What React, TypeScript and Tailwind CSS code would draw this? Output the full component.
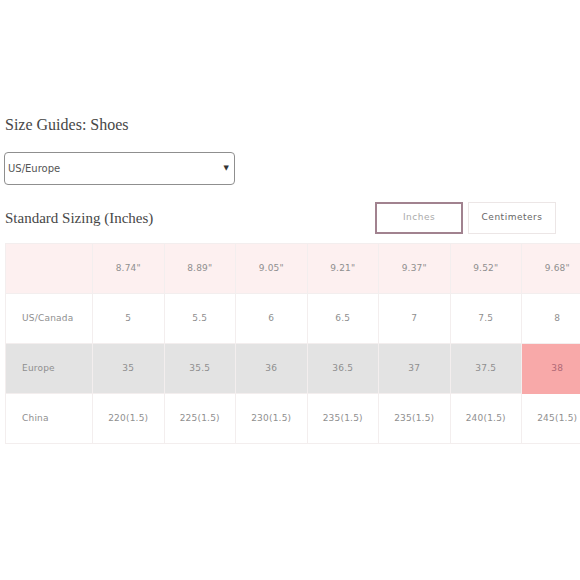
import React from 'react'

const sizes = ['8.74"', '8.89"', '9.05"', '9.21"', '9.37"', '9.52"', '9.68"']
const us = ['5', '5.5', '6', '6.5', '7', '7.5', '8']
const eu = ['35', '35.5', '36', '36.5', '37', '37.5', '38']
const cn = ['220(1.5)', '225(1.5)', '230(1.5)', '235(1.5)', '235(1.5)', '240(1.5)', '245(1.5)']

function Cell({ children, className = '' }: { children?: React.ReactNode; className?: string }) {
  return (
    <div className={`h-[50px] flex items-center justify-center border-r border-b border-[#f3eeee] ${className}`}>
      {children}
    </div>
  )
}

function Label({ children, className = '' }: { children?: React.ReactNode; className?: string }) {
  return (
    <div className={`h-[50px] flex items-center pl-4 border-r border-b border-[#f3eeee] ${className}`}>
      {children}
    </div>
  )
}

export default function App() {
  return (
    <div className="w-[580px] h-[580px] overflow-hidden bg-white pt-[115px] pl-[4px]">
      <h1 className="text-[16px] leading-5 text-[#474747] pl-[1px]" style={{ fontFamily: '"Liberation Serif", serif' }}>
        Size Guides: Shoes
      </h1>

      <div className="mt-[17px] w-[231px] h-[33px] border border-[#8f8f8f] rounded-[4px] flex items-center justify-between pl-[3px] pr-[5px] font-['DejaVu_Sans',sans-serif] text-[10px] text-[#555]">
        <span>US/Europe</span>
        <span className="text-[7px] text-[#333]">▼</span>
      </div>

      <div className="mt-[17px] flex items-center h-[32px]">
        <h2 className="w-[371px] text-[15px] text-[#474747] pl-[1px]" style={{ fontFamily: '"Liberation Serif", serif' }}>
          Standard Sizing (Inches)
        </h2>
        <div className="flex gap-[5px] font-['DejaVu_Sans',sans-serif] text-[9px] tracking-[0.5px]">
          <button className="w-[88px] h-[32px] border-2 border-[#a1828f] text-[#aaa]">Inches</button>
          <button className="w-[88px] h-[32px] border border-[#ece6e6] text-[#666]">Centimeters</button>
        </div>
      </div>

      <div className="mt-[9px] ml-[1px] w-[600px] grid grid-cols-[87px_repeat(7,71.5px)] border-t border-l border-[#f3eeee] font-['DejaVu_Sans',sans-serif] text-[9px] tracking-[0.2px] text-[#8f8f8f]">
        <Label className="bg-[#fdf0f0]" />
        {sizes.map((s, i) => (
          <Cell key={'s' + i} className="bg-[#fdf0f0]">{s}</Cell>
        ))}

        <Label>US/Canada</Label>
        {us.map((s, i) => (
          <Cell key={'u' + i}>{s}</Cell>
        ))}

        <Label className="bg-[#e3e3e3] border-[#e3e3e3]">Europe</Label>
        {eu.map((s, i) => (
          <Cell
            key={'e' + i}
            className={i === 6 ? 'bg-[#f8a9a9] border-[#f8a9a9] text-[#b06a76]' : 'bg-[#e3e3e3] border-[#e3e3e3]'}
          >
            {s}
          </Cell>
        ))}

        <Label>China</Label>
        {cn.map((s, i) => (
          <Cell key={'c' + i}>{s}</Cell>
        ))}
      </div>
    </div>
  )
}
